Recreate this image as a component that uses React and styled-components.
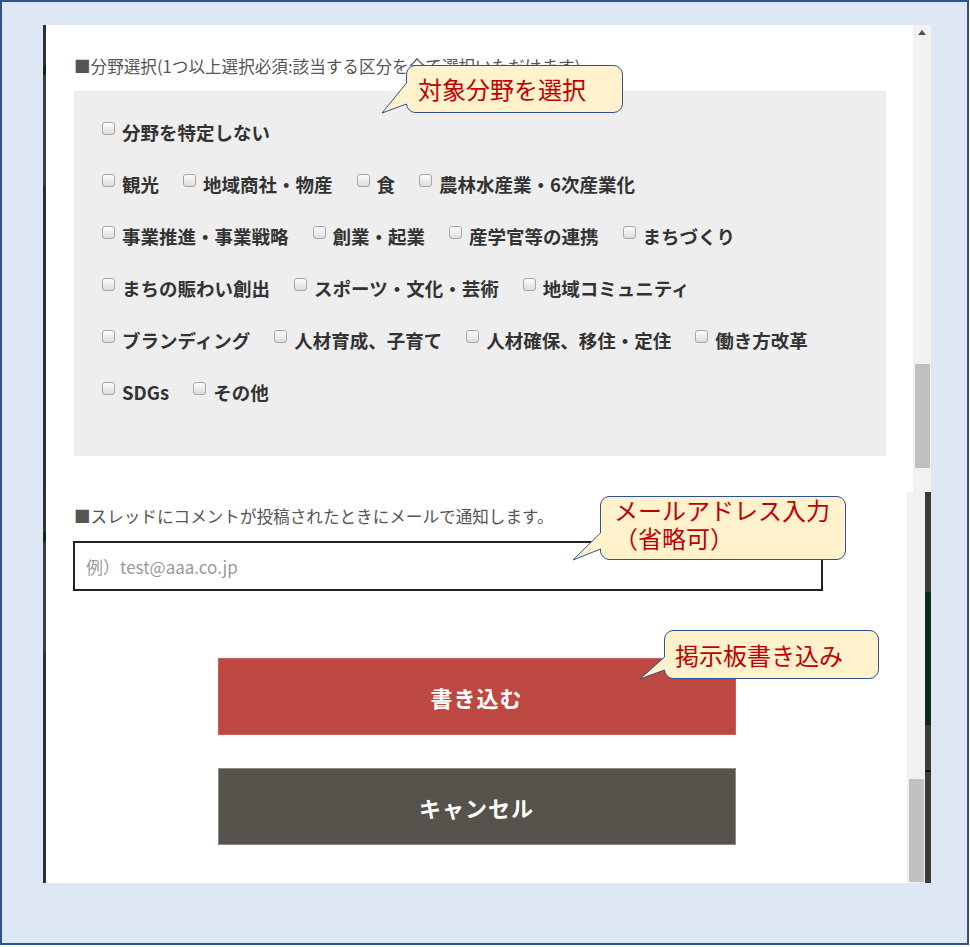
import React from "react";
import styled, { createGlobalStyle } from "styled-components";

const GlobalStyle = createGlobalStyle`
  html, body { margin: 0; padding: 0; background: #fff; }
  body { font-family: "Noto Sans CJK JP", "Noto Sans", sans-serif; }
  * { box-sizing: border-box; }
`;

// 外枠（スライドの背景）
const Frame = styled.div`
  position: relative;
  width: 969px;
  height: 945px;
  border: 2px solid #2f528f;
  background: #dde8f4;
  padding: 23px 0 0 41px;
`;

const Shot = styled.div`
  width: 888px;
  display: flex;
  flex-direction: column;
`;

const Pane = styled.div`
  display: flex;
  height: ${(p) => p.$h}px;
`;

const LeftEdge = styled.div`
  width: 3px;
  background: linear-gradient(#2e3135 0 40px, #12271d 40px 50px, #3a3e44 50px 160px, #2b2f33 160px 480px, #1c1c22 480px 800px, #3a1c22 800px);
`;

const RightEdge = styled.div`
  width: 6px;
  background: linear-gradient(#3b3b3b 0 100px, #0e2a1c 100px 233px, #3b3b3b 233px 278px, #151515 278px 280px, #3b3b3b 280px);
`;

const Modal = styled.div`
  background: #fff;
  width: ${(p) => p.$w}px;
  padding: ${(p) => p.$pad};
`;

const Scrollbar = styled.div`
  width: 18px;
  background: #f1f1f1;
  display: flex;
  flex-direction: column;
`;

const ArrowUp = styled.div`
  height: 17px;
  display: flex;
  justify-content: center;
  padding-top: 5px;
  &::before {
    content: "";
    width: 0;
    height: 0;
    border-left: 4px solid transparent;
    border-right: 4px solid transparent;
    border-bottom: 5px solid #505050;
  }
`;

const Thumb = styled.div`
  margin: ${(p) => p.$top}px 1px 0 2px;
  height: ${(p) => p.$h}px;
  background: #c1c1c1;
`;

const SectionLabel = styled.div`
  font-size: 16.6px;
  line-height: 24px;
  color: #555;
  padding-left: ${(p) => p.$indent || 0}px;
  white-space: nowrap;
`;

const FieldBox = styled.div`
  margin-top: 13px;
  background: #eeeeee;
  padding: 28px 28px 51px;
  display: flex;
  flex-direction: column;
  gap: 26px;
`;

const Row = styled.div`
  display: flex;
`;

const Item = styled.label`
  display: flex;
  align-items: flex-start;
  margin-right: 24px;
  font-size: 18.5px;
  line-height: 26px;
  font-weight: 700;
  color: #333;
  white-space: nowrap;
`;

const Check = styled.span`
  width: 13px;
  height: 13px;
  margin: 3px 7px 0 0;
  border: 1px solid #a6a6a6;
  border-radius: 3px;
  background: linear-gradient(#fdfdfd, #dcdcdc);
  flex-shrink: 0;
`;

const MailInput = styled.input`
  display: block;
  margin-top: 13px;
  width: 750px;
  height: 50px;
  border: 2px solid #222;
  padding: 0 11px;
  font-family: inherit;
  font-size: 17px;
  color: #333;
  outline: none;
  &::placeholder { color: #999; }
`;

const Buttons = styled.div`
  margin-top: 67px;
  display: flex;
  flex-direction: column;
  align-items: center;
  gap: 33px;
`;

const Button = styled.button`
  width: 518px;
  height: 77px;
  border: 1px solid ${(p) => p.$line};
  background: ${(p) => p.$bg};
  color: #fff;
  font-family: inherit;
  font-size: 22px;
  font-weight: 700;
  letter-spacing: 1px;
  cursor: pointer;
`;

// 吹き出し（注釈）
const Bubble = styled.div`
  position: absolute;
  left: ${(p) => p.$x}px;
  top: ${(p) => p.$y}px;
  width: ${(p) => p.$w}px;
  height: ${(p) => p.$h}px;
`;

const BubbleShape = styled.svg`
  position: absolute;
  left: 0;
  top: 0;
  overflow: visible;
`;

const BubbleText = styled.div`
  position: relative;
  padding-left: ${(p) => p.$pad}px;
  font-size: 24px;
  line-height: ${(p) => p.$lh}px;
  color: #c00000;
  white-space: nowrap;
`;

function Callout({ x, y, w, h, b1, b2, tip, pad, lh, children }) {
  const r = 9;
  const d = `M ${r} 0.5 H ${w - r} A ${r} ${r} 0 0 1 ${w - 0.5} ${r} V ${h - r} A ${r} ${r} 0 0 1 ${w - r} ${h - 0.5} H ${r} A ${r} ${r} 0 0 1 0.5 ${h - r} V ${b2} L ${tip[0]} ${tip[1]} L 0.5 ${b1} V ${r} A ${r} ${r} 0 0 1 ${r} 0.5 Z`;
  return (
    <Bubble $x={x} $y={y} $w={w} $h={h}>
      <BubbleShape width={w} height={h}>
        <path d={d} fill="#fff2cc" stroke="#2f528f" strokeWidth="1" />
      </BubbleShape>
      <BubbleText $pad={pad} $lh={lh}>{children}</BubbleText>
    </Bubble>
  );
}

const rows = [
  ["分野を特定しない"],
  ["観光", "地域商社・物産", "食", "農林水産業・6次産業化"],
  ["事業推進・事業戦略", "創業・起業", "産学官等の連携", "まちづくり"],
  ["まちの賑わい創出", "スポーツ・文化・芸術", "地域コミュニティ"],
  ["ブランディング", "人材育成、子育て", "人材確保、移住・定住", "働き方改革"],
  ["SDGs", "その他"],
];

export default function App() {
  return (
    <>
      <GlobalStyle />
      <Frame>
        <Shot>
          <Pane $h={467}>
            <LeftEdge />
            <Modal $w={867} $pad="29px 27px 0 28px">
              <SectionLabel>■分野選択(1つ以上選択必須:該当する区分を全て選択いただけます)</SectionLabel>
              <FieldBox>
                {rows.map((row, i) => (
                  <Row key={i}>
                    {row.map((name) => (
                      <Item key={name}>
                        <Check />
                        {name}
                      </Item>
                    ))}
                  </Row>
                ))}
              </FieldBox>
            </Modal>
            <Scrollbar>
              <ArrowUp />
              <Thumb $top={322} $h={104} />
            </Scrollbar>
          </Pane>
          <Pane $h={391}>
            <LeftEdge />
            <Modal $w={861} $pad="12px 27px 0 27px">
              <SectionLabel $indent={1}>■スレッドにコメントが投稿されたときにメールで通知します。</SectionLabel>
              <MailInput type="email" placeholder="例）test@aaa.co.jp" />
              <Buttons>
                <Button $bg="#bd4741" $line="#c9605a">書き込む</Button>
                <Button $bg="#56524c" $line="#8e8a85">キャンセル</Button>
              </Buttons>
            </Modal>
            <Scrollbar>
              <Thumb $top={287} $h={103} />
            </Scrollbar>
            <RightEdge />
          </Pane>
        </Shot>

        <Callout x={404} y={63} w={217} h={48} b1={18} b2={39} tip={[-24, 48]} pad={12} lh={48}>
          対象分野を選択
        </Callout>
        <Callout x={598} y={494} w={246} h={64} b1={37} b2={53} tip={[-27, 64]} pad={14} lh={28}>
          メールアドレス入力
          <br />
          （省略可）
        </Callout>
        <Callout x={662} y={628} w={215} h={49} b1={27} b2={40} tip={[-24, 49]} pad={11} lh={49}>
          掲示板書き込み
        </Callout>
      </Frame>
    </>
  );
}
